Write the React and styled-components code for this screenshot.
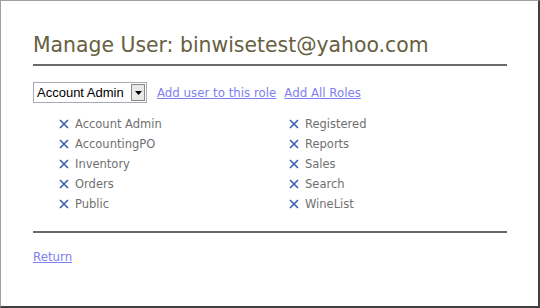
import React from 'react'
import styled, { createGlobalStyle } from 'styled-components'

const GlobalStyle = createGlobalStyle`
  html, body {
    margin: 0;
    padding: 0;
    background: #fff;
  }
`

const roles = [
  ['Account Admin', 'Registered'],
  ['AccountingPO', 'Reports'],
  ['Inventory', 'Sales'],
  ['Orders', 'Search'],
  ['Public', 'WineList'],
]

const App = () => {
  const left = roles.map(r => r[0])
  const right = roles.map(r => r[1])

  return (
    <Frame>
      <GlobalStyle />
      <Title>Manage User: binwisetest@yahoo.com</Title>
      <Rule />
      <Toolbar>
        <Select>
          <span>Account Admin</span>
          <Arrow>
            <svg width="7" height="4" viewBox="0 0 7 4">
              <path d="M0 0 H7 L3.5 4 Z" fill="#000" />
            </svg>
          </Arrow>
        </Select>
        <LinkText href="#">Add user to this role</LinkText>
        <LinkText href="#">Add All Roles</LinkText>
      </Toolbar>
      <Roles>
        {[left, right].map((col, i) => (
          <Column key={i}>
            {col.map(name => (
              <Role key={name}>
                <Remove>
                  <svg width="10" height="10" viewBox="0 0 10 10">
                    <path d="M1 1 L9 9 M9 1 L1 9" stroke="#3b5cb4" strokeWidth="1.6" />
                  </svg>
                </Remove>
                {name}
              </Role>
            ))}
          </Column>
        ))}
      </Roles>
      <Rule />
      <Footer>
        <LinkText href="#">Return</LinkText>
      </Footer>
    </Frame>
  )
}

const Frame = styled.div`
  box-sizing: border-box;
  width: 540px;
  height: 308px;
  border-top: 1px solid #a0a0a0;
  border-left: 1px solid #a0a0a0;
  border-right: 2px solid #404040;
  border-bottom: 2px solid #404040;
  padding: 30px 31px 0 32px;
  font-family: "DejaVu Sans", Verdana, sans-serif;
`

const Title = styled.h1`
  margin: 0;
  font-weight: normal;
  font-size: 20.4px;
  line-height: 28px;
  color: #666040;
`

const Rule = styled.div`
  height: 2px;
  background: #6a6a6a;
  margin-top: 5px;
`

const Toolbar = styled.div`
  display: flex;
  align-items: center;
  margin-top: 16px;
  gap: 8px;
`

const Select = styled.div`
  display: flex;
  align-items: center;
  box-sizing: border-box;
  height: 21px;
  width: 114px;
  border: 1px solid #a5acb5;
  padding-left: 3px;
  font-family: "Liberation Sans", Arial, sans-serif;
  font-size: 13px;
  color: #000;
  margin-right: 2px;
  span {
    flex: 1;
    white-space: nowrap;
  }
`

const Arrow = styled.div`
  display: flex;
  align-items: center;
  justify-content: center;
  width: 12px;
  height: 15px;
  margin-right: 1px;
  border: 1px solid #888;
  background: #e8e8e8;
`

const LinkText = styled.a`
  font-size: 11.8px;
  color: #8080f0;
  text-decoration: underline;
`

const Roles = styled.div`
  display: grid;
  grid-template-columns: 230px 1fr;
  padding-left: 26px;
  margin-top: 11px;
  margin-bottom: 17px;
`

const Column = styled.div`
  display: flex;
  flex-direction: column;
`

const Role = styled.div`
  display: flex;
  align-items: center;
  height: 20px;
  font-size: 11.5px;
  color: #707070;
`

const Remove = styled.span`
  display: inline-flex;
  width: 16px;
  svg {
    display: block;
  }
`

const Footer = styled.div`
  margin-top: 13px;
`

export default App
